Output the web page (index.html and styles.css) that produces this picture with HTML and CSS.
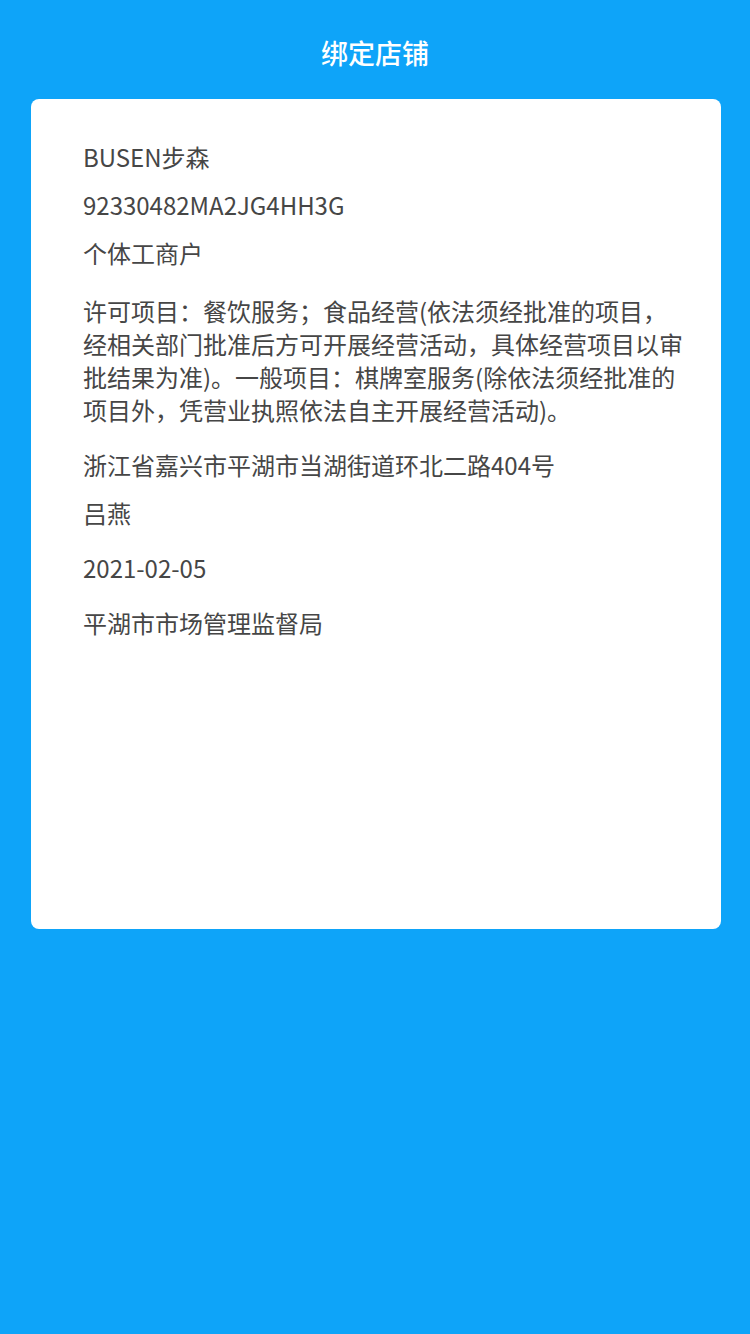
FILE: index.html
```html
<!DOCTYPE html>
<html lang="zh-CN">
<head>
    <meta charset="UTF-8">
    <meta name="viewport" content="width=750">
    <title>绑定店铺</title>
    <link rel="stylesheet" href="styles.css">
</head>
<body>
    <header class="nav">
        <h1>绑定店铺</h1>
    </header>

    <main class="page">
        <div class="card">
            <div class="field">BUSEN步森</div>
            <div class="field">92330482MA2JG4HH3G</div>
            <div class="field">个体工商户</div>
            <div class="field scope">许可项目：餐饮服务；食品经营(依法须经批准的项目，经相关部门批准后方可开展经营活动，具体经营项目以审批结果为准)。一般项目：棋牌室服务(除依法须经批准的项目外，凭营业执照依法自主开展经营活动)。</div>
            <div class="field address">浙江省嘉兴市平湖市当湖街道环北二路404号</div>
            <div class="field">吕燕</div>
            <div class="field spaced">2021-02-05</div>
            <div class="field spaced">平湖市市场管理监督局</div>
        </div>
    </main>
</body>
</html>
```

FILE: styles.css
```css
:root {
    --brand: #0ea4f9;
    --text: #464646;
    --card-bg: #ffffff;
}

* {
    margin: 0;
    padding: 0;
    box-sizing: border-box;
}

html, body {
    height: 100%;
}

body {
    font-family: "Noto Sans CJK SC", "Noto Sans", sans-serif;
    background-color: var(--brand);
    color: var(--text);
}

.nav {
    height: 99px;
    display: flex;
    align-items: center;
    justify-content: center;
    padding-top: 6px;
}

.nav h1 {
    font-size: 27px;
    font-weight: 500;
    color: #fff;
    line-height: 1;
}

.page {
    padding: 0 29px 0 31px;
}

.card {
    background-color: var(--card-bg);
    border-radius: 8px;
    min-height: 830px;
    padding: 41px 34px 0 52px;
    display: flex;
    flex-direction: column;
    gap: 14px;
}

.field {
    font-size: 24px;
    line-height: 34px;
}

.field.scope {
    margin-top: 10px;
    line-height: 33px;
}

.field.address {
    margin-top: 8px;
}

.field.spaced {
    margin-top: 7px;
}
```
